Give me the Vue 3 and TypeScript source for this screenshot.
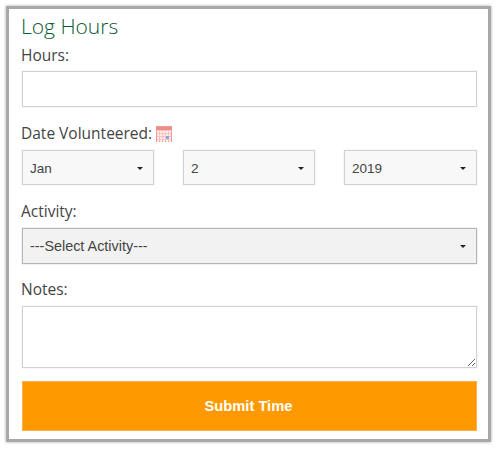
<script setup lang="ts">
const dates: { value: string }[] = [{ value: 'Jan' }, { value: '2' }, { value: '2019' }]
const cells: { x: number; y: number }[] = []
for (let y = 5; y < 15; y += 3) {
  for (let x = 1; x < 15; x += 3) cells.push({ x, y })
}
</script>

<template>
  <div class="page">
    <form class="card" @submit.prevent>
      <h2 class="title">Log Hours</h2>
      <label class="label hours-label" for="hours">Hours:</label>
      <input id="hours" class="text-input" type="text" />

      <div class="label date-label">
        <span>Date Volunteered:</span>
        <svg class="cal" width="16" height="16" viewBox="0 0 16 16" aria-hidden="true">
          <rect x="0.5" y="0.5" width="15" height="15" fill="#f9c4c0" stroke="#ee9a94" />
          <rect x="1" y="1" width="14" height="3" fill="#f08a84" />
          <rect v-for="(c, i) in cells" :key="i" :x="c.x" :y="c.y" width="2" height="2" fill="#fdeeee" />
          <rect x="10" y="10" width="3" height="3" fill="#8f9ee6" />
        </svg>
      </div>
      <div class="date-row">
        <button v-for="d in dates" :key="d.value" type="button" class="drop date-drop">
          <span>{{ d.value }}</span><i class="caret"></i>
        </button>
      </div>

      <div class="label activity-label">Activity:</div>
      <button type="button" class="drop activity">
        <span>---Select Activity---</span><i class="caret"></i>
      </button>

      <label class="label notes-label" for="notes">Notes:</label>
      <textarea id="notes" class="notes"></textarea>

      <button type="submit" class="submit">Submit Time</button>
    </form>
  </div>
</template>

<style>
html, body { margin: 0; background: #fff; }
</style>

<style scoped>
.page {
  box-sizing: border-box;
  width: 498px;
  height: 450px;
  padding: 6px 7px 8px 6px;
}
.card {
  box-sizing: border-box;
  height: 436px;
  border: 3px solid #a8a8a8;
  box-shadow: 0 0 3px rgba(0, 0, 0, 0.35);
  padding: 0 11px 0 13px;
  display: flex;
  flex-direction: column;
  background: #fff;
  font-family: "Open Sans", sans-serif;
}
.title {
  margin: 0 0 0 -1px;
  font-size: 21px;
  line-height: 30px;
  font-weight: 300;
  color: #0a5a36;
  padding-top: 2px;
}
.label {
  font-size: 15.5px;
  line-height: 22px;
  color: #444;
  margin-left: -1px;
}
.hours-label { margin-top: 3px; }
.text-input {
  box-sizing: border-box;
  height: 36px;
  margin-top: 5px;
  border: 1px solid #d2d2d2;
  box-shadow: 0 0 1px #cfcfcf;
  background: #fff;
  outline: none;
}
.date-label {
  margin-top: 15px;
  display: flex;
  align-items: center;
  gap: 4px;
}
.cal { margin-top: 2px; }
.date-row {
  margin-top: 6px;
  display: grid;
  grid-template-columns: 132px 132px 133px;
  column-gap: 29px;
}
.drop {
  box-sizing: border-box;
  height: 35px;
  padding: 0 7px;
  border: 1px solid #d2d2d2;
  box-shadow: 0 0 1px #cfcfcf;
  background: #f8f8f8;
  display: flex;
  align-items: center;
  justify-content: space-between;
  font-family: "Liberation Sans", sans-serif;
  font-size: 13.5px;
  color: #444;
}
.date-drop { padding-top: 1px; }
.caret {
  width: 0;
  height: 0;
  margin-right: 3px;
  border-left: 3px solid transparent;
  border-right: 3px solid transparent;
  border-top: 3px solid #222;
}
.activity-label { margin-top: 15px; }
.activity {
  height: 36px;
  margin-top: 6px;
  background: #f2f2f2;
  border-color: #b4b4b4;
  box-shadow: 0 0 1px #b4b4b4;
  font-size: 14.4px;
}
.notes-label { margin-top: 14px; }
.notes {
  box-sizing: border-box;
  height: 62px;
  margin-top: 6px;
  border: 1px solid #d2d2d2;
  box-shadow: 0 0 1px #cfcfcf;
  background: #fff;
  outline: none;
  resize: vertical;
  display: block;
}
.submit {
  height: 50px;
  margin-top: 13px;
  padding: 0 2px 0 0;
  border: 1px solid #ffb04d;
  background: #ff9900;
  color: #fff;
  font-family: "Liberation Sans", sans-serif;
  font-size: 14.7px;
  font-weight: 700;
}
</style>
